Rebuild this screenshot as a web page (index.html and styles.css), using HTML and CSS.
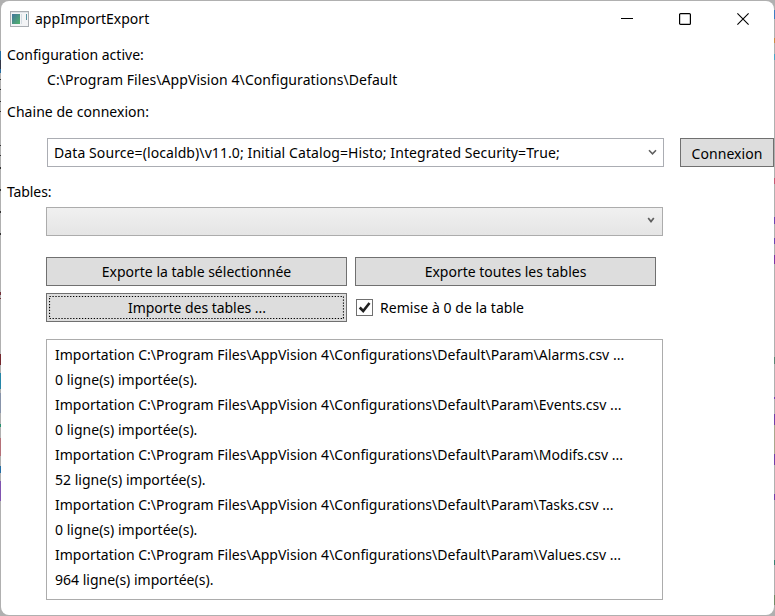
FILE: index.html
```html
<!DOCTYPE html>
<html lang="fr">
<head>
<meta charset="utf-8">
<title>appImportExport</title>
<link rel="stylesheet" href="styles.css">
</head>
<body>
<main class="window">
  <header class="titlebar">
    <svg class="app-icon" width="19" height="16" viewBox="0 0 19 16">
      <defs><linearGradient id="pane" x1="0" y1="0" x2="1" y2="1"><stop offset="0" stop-color="#41749d"/><stop offset="1" stop-color="#51b46b"/></linearGradient></defs>
      <rect x=".5" y=".5" width="18" height="15" fill="#f3f4f6" stroke="#a9adb2"/>
      <path d="M1 1.5h17" stroke="#dfe3e8"/>
      <rect x="2" y="3" width="8" height="10" fill="url(#pane)"/>
      <path d="M11.5 3v10" stroke="#d5dce3"/>
      <rect x="16" y="3" width="1" height="6" fill="#5793a1"/>
    </svg>
    <h1>appImportExport</h1>
    <div class="controls">
      <svg width="12" height="12" viewBox="0 0 12 12"><path d="M0 5.5h12" stroke="#000"/></svg>
      <svg width="12" height="12" viewBox="0 0 12 12"><rect x=".6" y=".6" width="10.8" height="10.8" rx="1" fill="none" stroke="#000" stroke-width="1.2"/></svg>
      <svg width="12" height="12" viewBox="0 0 12 12"><path d="M.4.4l11.2 11.2M11.6.4L.4 11.6" stroke="#000" stroke-width="1.1"/></svg>
    </div>
  </header>
  <p class="label">Configuration active:</p>
  <p class="path">C:\Program Files\AppVision 4\Configurations\Default</p>
  <p class="label chain">Chaine de connexion:</p>
  <div class="connection">
    <div class="combo editable"><span>Data Source=(localdb)\v11.0; Initial Catalog=Histo; Integrated Security=True;</span>
      <svg class="arrow" width="9" height="7" viewBox="0 0 9 7"><path d="M1 1.3L4.5 4.8L8 1.3" fill="none" stroke="#606060" stroke-width="1.6"/></svg>
    </div>
    <div class="button"><span>Connexion</span></div>
  </div>
  <p class="label tables">Tables:</p>
  <div class="combo select">
    <svg class="arrow" width="8" height="7" viewBox="0 0 8 7"><path d="M1.2 1L4 4.6L6.8 1" fill="none" stroke="#606060" stroke-width="1.7"/></svg>
  </div>
  <div class="actions">
    <div class="button"><span>Exporte la table sélectionnée</span></div>
    <div class="button"><span>Exporte toutes les tables</span></div>
    <div class="button focused"><span>Importe des tables ...</span>
      <svg class="focus" width="295" height="23" viewBox="0 0 295 23"><rect x=".5" y=".5" width="294" height="22" fill="none" stroke="#000" stroke-width="1.2" stroke-dasharray="1.3 1.64"/></svg>
    </div>
    <div class="check">
      <svg width="17" height="17" viewBox="0 0 17 17"><rect x=".5" y=".5" width="16" height="16" fill="#fff" stroke="#707070"/><path d="M3.7 8.5L7.2 12L13.5 4" fill="none" stroke="#212121" stroke-width="2.6"/></svg>
      <span>Remise à 0 de la table</span>
    </div>
  </div>
  <div class="log">
    <p>Importation C:\Program Files\AppVision 4\Configurations\Default\Param\Alarms.csv ...</p>
    <p>0 ligne(s) importée(s).</p>
    <p>Importation C:\Program Files\AppVision 4\Configurations\Default\Param\Events.csv ...</p>
    <p>0 ligne(s) importée(s).</p>
    <p>Importation C:\Program Files\AppVision 4\Configurations\Default\Param\Modifs.csv ...</p>
    <p>52 ligne(s) importée(s).</p>
    <p>Importation C:\Program Files\AppVision 4\Configurations\Default\Param\Tasks.csv ...</p>
    <p>0 ligne(s) importée(s).</p>
    <p>Importation C:\Program Files\AppVision 4\Configurations\Default\Param\Values.csv ...</p>
    <p>964 ligne(s) importée(s).</p>
  </div>
</main>
</body>
</html>
```
FILE: styles.css
```css
* { box-sizing: border-box; }
html { background: #b0b0b0; }
body {
  margin: 0;
  padding: 1px;
  width: 775px;
  height: 616px;
  overflow: hidden;
  font: 14px/20px "Noto Sans", "Open Sans", sans-serif;
  color: #000;
  background:
    linear-gradient(#b0b0b0 51px, #246ca0 51px 60px, #333647 60px 69px, #246ca0 69px 73px, #b0b0b0 73px 79px, #333 79px 80px, #b0b0b0 80px 89px, #333 89px 90px, #b0b0b0 90px 101px, #333 101px 102px, #b0b0b0 102px 111px, #333 111px 112px, #b0b0b0 112px 145px, #333 145px 146px, #b0b0b0 146px 155px, #333 155px 156px, #b0b0b0 156px 167px, #333 167px 169px, #b0b0b0 169px 189px, #333 189px 191px, #b0b0b0 191px 211px, #333 211px 213px, #b0b0b0 213px 233px, #333 233px 235px, #b0b0b0 235px 292px, #743039 292px 295px, #b0b0b0 295px 298px, #743039 298px 299px, #b0b0b0 299px 354px, #74272d 354px 365px, #b0b0b0 365px 373px, #2586a8 373px 389px, #b0b0b0 389px 393px, #8793aa 393px 413px, #b0b0b0 413px 424px, #269270 424px 427px, #b0b0b0 427px 438px, #b57078 438px 456px, #b0b0b0 456px 466px, #236da5 466px 473px, #b0b0b0 473px 481px, #8053b0 481px 501px, #b0b0b0 501px) 0 0 / 1px 616px no-repeat,
    linear-gradient(#b0b0b0 10px, #3f7dc0 10px 19px, #b0b0b0 19px 38px, #c98c43 38px 43px, #b0b0b0 43px 54px, #49a5c6 54px 60px, #b0b0b0 60px 178px, #c35a75 178px 184px, #b0b0b0 184px 217px, #6d45b2 217px 224px, #b0b0b0 224px 238px, #6d45b2 238px 244px, #b0b0b0 244px 255px, #7d35a5 255px 264px, #b0b0b0 264px 357px, #588573 357px 364px, #b0b0b0 364px 397px, #7240b2 397px 399px, #b0b0b0 399px 414px, #7240a8 414px 425px, #a9a78e 425px 454px, #7240a8 454px 465px, #b0b0b0 465px 494px, #7240a8 494px 500px, #b0b0b0 500px 560px, #368171 560px 565px, #b0b0b0 565px 595px, #708c67 595px 605px, #b0b0b0 605px) 774px 0 / 1px 616px no-repeat,
    #b0b0b0;
}
h1, p { margin: 0; font-size: 14px; font-weight: 400; }
span, h1, p { white-space: nowrap; }
.window {
  width: 773px;
  height: 614px;
  overflow: hidden;
  border-radius: 8px;
  background: #fff;
}
.titlebar { display: flex; align-items: center; height: 36px; padding-left: 9px; }
.titlebar h1 { margin-left: 6px; letter-spacing: .02px; }
.controls { display: flex; gap: 46px; margin-left: auto; margin-right: 25px; }
.controls svg, .app-icon { display: block; }
.label { height: 20px; margin: 8px 0 0 6px; letter-spacing: .02px; }
.path { margin: 5px 0 0 46px; letter-spacing: .075px; }
.label.chain { margin-top: 12px; letter-spacing: .04px; }
.connection { display: flex; gap: 16px; margin: 16px 0 0 46px; }
.combo { position: relative; width: 617px; height: 29px; border: 1px solid #acacac; }
.editable { padding: 4px 6px; border-color: #abadb3; letter-spacing: .09px; }
.arrow { position: absolute; right: 6px; top: 10px; }
.select .arrow { right: 7px; top: 9px; }
.button {
  position: relative;
  display: flex;
  align-items: center;
  justify-content: center;
  height: 29px;
  border: 1px solid #707070;
  background: #ddd;
}
.connection .button { width: 94px; padding-top: 2px; letter-spacing: .06px; }
.label.tables { margin-top: 15px; letter-spacing: -.1px; }
.select { margin: 5px 0 0 45px; background: linear-gradient(#f0f0f0, #e5e5e5); }
.actions { display: grid; grid-template-columns: 301px 301px; gap: 7px 8px; margin: 21px 0 0 45px; }
.focused { padding: 1px 0 0 1px; letter-spacing: -.04px; }
.focus { position: absolute; left: 2px; top: 2px; }
.check { display: flex; align-items: center; height: 29px; padding-left: 1px; gap: 7px; letter-spacing: .05px; }
.check svg { display: block; }
.log { width: 617px; height: 261px; margin: 17px 0 0 45px; padding: 2px 8px; border: 1px solid #acacac; letter-spacing: .015px; }
.log p { height: 25px; line-height: 25px; }
```
